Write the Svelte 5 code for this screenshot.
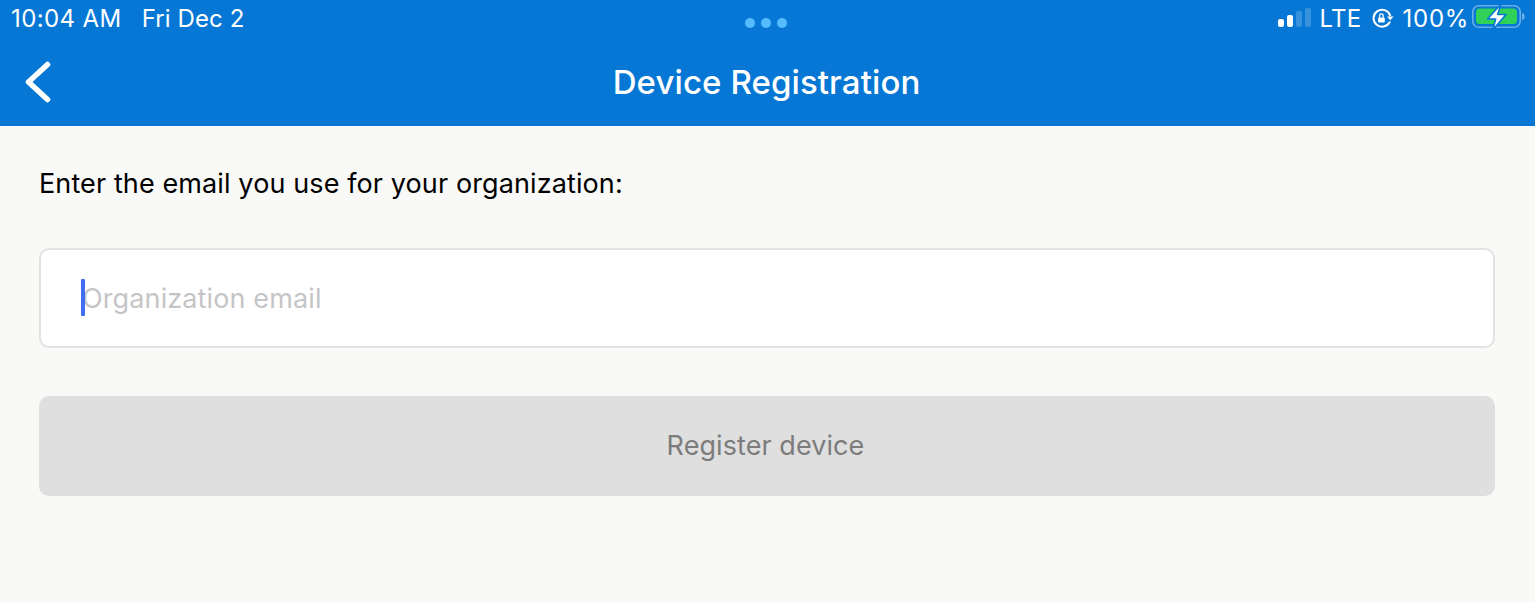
<script lang="ts">
  let email = '';
</script>

<div class="screen">
  <header class="topbar">
    <div class="status">
      <div class="status-left">
        <span class="time">10:04 AM</span>
        <span>Fri Dec 2</span>
      </div>
      <div class="dots"><i></i><i></i><i></i></div>
      <div class="status-right">
        <div class="signal"><i class="on s1"></i><i class="on s2"></i><i class="s3"></i><i class="s4"></i></div>
        <span class="lte">LTE</span>
        <svg class="lock" width="22" height="20" viewBox="0 0 22 20" fill="none">
          <path d="M17.600 14.200A8.500 8.500 0 1 1 18.100 7.400" stroke="#fff" stroke-width="2" stroke-linecap="round"/>
          <path d="M15 8.400h6.600l-3.300 3.800z" fill="#fff"/>
          <rect x="6" y="9.400" width="6.800" height="5.200" rx="1" fill="#fff"/>
          <path d="M7.600 9.800V7.700a1.800 1.800 0 0 1 3.600 0v2.100" stroke="#fff" stroke-width="1.300"/>
        </svg>
        <span class="pct">100%</span>
        <svg class="battery" width="54" height="30" viewBox="0 0 54 30" fill="none">
          <rect x="0.800" y="3.800" width="47.400" height="21.400" rx="6" stroke="#fff" stroke-opacity=".4" stroke-width="1.600"/>
          <rect x="4" y="6.500" width="41" height="15.500" rx="3.500" fill="#30d158"/>
          <path d="M50 11c1.800.5 2.800 1.800 2.800 3.500S51.800 17.500 50 18z" fill="#fff" fill-opacity=".4"/>
          <path d="M29 2 15.500 17h8.200l-3 11L34 12.500h-8.300z" fill="#fff" stroke="#0677d4" stroke-width="1.600" stroke-linejoin="round"/>
        </svg>
      </div>
    </div>
    <div class="navbar">
      <button class="back" aria-label="Back">
        <svg width="30" height="46" viewBox="0 0 30 46" fill="none">
          <path d="M24.500 5.500 5.500 23l19 17.500" stroke="#fff" stroke-width="5.500" stroke-linecap="round" stroke-linejoin="round"/>
        </svg>
      </button>
      <h1>Device Registration</h1>
    </div>
  </header>

  <main class="content">
    <label class="prompt" for="org-email">Enter the email you use for your organization:</label>
    <div class="field">
      <span class="caret"></span>
      <input id="org-email" type="text" placeholder="Organization email" bind:value={email} />
    </div>
    <button class="submit" disabled>Register device</button>
  </main>
</div>

<style>
  :global(body) {
    margin: 0;
    background: #f9f9f7;
  }

  .screen {
    height: 602px;
    overflow: hidden;
    font-family: Inter, "Liberation Sans", sans-serif;
    background: #f9f9f7;
  }

  .topbar {
    height: 126px;
    background: #0677d4;
    color: #fff;
  }

  .status {
    height: 37px;
    display: grid;
    grid-template-columns: 1fr auto 1fr;
    align-items: center;
    padding: 0 9px 0 11px;
    font-size: 24px;
    line-height: 35px;
  }

  .status-left {
    display: flex;
    gap: 20px;
    padding-bottom: 1px;
  }

  .time {
    letter-spacing: 0.4px;
  }

  .status-left span:last-child {
    letter-spacing: 0.1px;
  }

  .dots {
    display: flex;
    gap: 6px;
    padding-top: 8px;
    margin-right: 5px;
  }

  .dots i {
    width: 10px;
    height: 10px;
    border-radius: 50%;
    background: #55bdff;
  }

  .status-right {
    display: flex;
    align-items: center;
    justify-content: flex-end;
  }

  .signal {
    display: flex;
    align-items: flex-end;
    gap: 2.500px;
    height: 19px;
    margin: -2px 8px 0 0;
  }

  .signal i {
    width: 6.500px;
    border-radius: 2px;
    background: rgba(255, 255, 255, 0.2);
  }

  .signal .on {
    background: #fff;
  }

  .s1 { height: 8px; }
  .s2 { height: 12px; }
  .s3 { height: 16px; }
  .s4 { height: 19px; }

  .lte {
    letter-spacing: 0.3px;
    margin: 0 10px 1px 0;
  }

  .lock {
    margin: 0 9px 2px 0;
  }

  .pct {
    letter-spacing: 0.7px;
    margin: 0 3px 1px 0;
  }

  .battery {
    margin-top: -3px;
  }

  .navbar {
    height: 89px;
    position: relative;
    display: flex;
    align-items: center;
    justify-content: center;
    padding-right: 2px;
    box-sizing: border-box;
  }

  .navbar h1 {
    margin: 1px 0 0;
    font-size: 33px;
    font-weight: 500;
    letter-spacing: 0.1px;
    color: #fff;
  }

  .back {
    position: absolute;
    left: 23px;
    top: 22px;
    padding: 0;
    border: 0;
    background: none;
    line-height: 0;
  }

  .content {
    padding: 42px 40px 0 39px;
    display: flex;
    flex-direction: column;
  }

  .prompt {
    font-size: 27px;
    line-height: 32px;
    letter-spacing: 0.11px;
    color: #000;
  }

  .field {
    margin-top: 48px;
    height: 96px;
    position: relative;
    display: flex;
    align-items: center;
    background: #fff;
    border: 2px solid #e2e2e2;
    border-radius: 10px;
  }

  .field input {
    flex: 1;
    height: 100%;
    padding: 0 0 0 41px;
    border: 0;
    outline: 0;
    background: none;
    font: inherit;
    font-size: 27px;
    letter-spacing: 0.12px;
  }

  .field input::placeholder {
    color: #c5c5c7;
    opacity: 1;
  }

  .caret {
    position: absolute;
    left: 40px;
    top: 29px;
    width: 4px;
    height: 37px;
    border-radius: 1px;
    background: #3f6ff0;
  }

  .submit {
    margin-top: 48px;
    height: 100px;
    padding: 0 3px 2px 0;
    border: 0;
    border-radius: 10px;
    background: #dfdfdf;
    color: #7c7c7c;
    font: inherit;
    font-size: 27px;
    letter-spacing: 0.07px;
  }
</style>
